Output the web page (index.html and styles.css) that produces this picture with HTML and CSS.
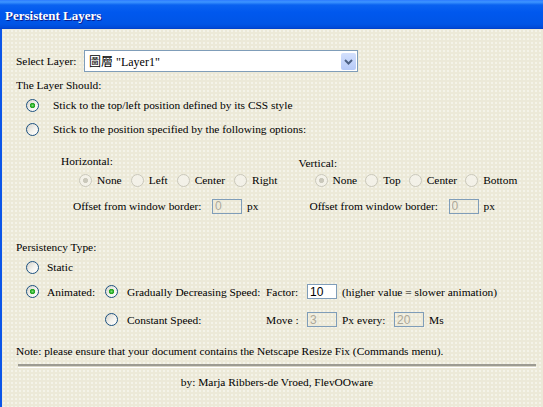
FILE: index.html
```html
<!DOCTYPE html>
<html lang="en">
<head>
    <meta charset="UTF-8">
    <title>Persistent Layers</title>
    <link rel="stylesheet" href="styles.css">
</head>
<body>

<div class="window">
    <div class="titlebar">Persistent Layers</div>

    <div class="content">
        <!-- Layer picker -->
        <div class="select-row">
            <span class="select-label">Select Layer:</span>
            <div class="select">
                <span class="select-text"><span class="cjk">圖層</span> "Layer1"</span>
                <span class="select-btn">
                    <svg width="15" height="17" viewBox="0 0 15 17">
                        <path d="M4 7 L7.5 10.5 L11 7" fill="none" stroke="#4d6185" stroke-width="2"/>
                    </svg>
                </span>
            </div>
        </div>

        <div class="heading">The Layer Should:</div>
        <div class="opt-row">
            <input type="radio" name="stick" class="radio" checked>
            <span>Stick to the top/left position defined by its CSS style</span>
        </div>
        <div class="opt-row">
            <input type="radio" name="stick" class="radio">
            <span>Stick to the position specified by the following options:</span>
        </div>

        <!-- Position options (disabled) -->
        <div class="position-panel">
            <div class="pos-col">
                <div class="pos-title">Horizontal:</div>
                <div class="choice-row">
                    <label class="choice"><input type="radio" name="hor" class="radio" checked disabled>None</label>
                    <label class="choice"><input type="radio" name="hor" class="radio" disabled>Left</label>
                    <label class="choice"><input type="radio" name="hor" class="radio" disabled>Center</label>
                    <label class="choice"><input type="radio" name="hor" class="radio" disabled>Right</label>
                </div>
                <div class="offset-row">
                    <span class="offset-label">Offset from window border:</span>
                    <input type="text" class="field" value="0" disabled>
                    <span class="unit">px</span>
                </div>
            </div>
            <div class="pos-col vertical">
                <div class="pos-title">Vertical:</div>
                <div class="choice-row">
                    <label class="choice"><input type="radio" name="ver" class="radio" checked disabled>None</label>
                    <label class="choice"><input type="radio" name="ver" class="radio" disabled>Top</label>
                    <label class="choice"><input type="radio" name="ver" class="radio" disabled>Center</label>
                    <label class="choice"><input type="radio" name="ver" class="radio" disabled>Bottom</label>
                </div>
                <div class="offset-row">
                    <span class="offset-label">Offset from window border:</span>
                    <input type="text" class="field" value="0" disabled>
                    <span class="unit">px</span>
                </div>
            </div>
        </div>

        <div class="heading persistency">Persistency Type:</div>
        <div class="type-grid">
            <input type="radio" name="type" class="radio">
            <span class="span-rest">Static</span>

            <input type="radio" name="type" class="radio" checked>
            <span>Animated:</span>
            <input type="radio" name="speed" class="radio" checked>
            <span>Gradually Decreasing Speed:</span>
            <span>Factor:</span>
            <div class="cell">
                <input type="text" class="field" value="10">
                <span>(higher value = slower animation)</span>
            </div>

            <span></span>
            <span></span>
            <input type="radio" name="speed" class="radio">
            <span>Constant Speed:</span>
            <span>Move :</span>
            <div class="cell">
                <input type="text" class="field" value="3" disabled>
                <span class="every">Px every:</span>
                <input type="text" class="field" value="20" disabled>
                <span>Ms</span>
            </div>
        </div>

        <div class="note">Note: please ensure that your document contains the Netscape Resize Fix (Commands menu).</div>
        <div class="divider"></div>
        <div class="credits">by: Marja Ribbers-de Vroed, FlevOOware</div>
    </div>
</div>

</body>
</html>
```

FILE: styles.css
```css
body {
    margin: 0;
    padding: 0;
    font-family: "Liberation Serif", "DejaVu Serif", serif;
    font-size: 11.4px;
    line-height: 16px;
    color: #000;
    white-space: nowrap;
}
.cjk {
    font-family: "Noto Sans CJK TC", sans-serif;
    font-size: 12px;
}
.window {
    width: 543px;
    height: 407px;
    overflow: hidden;
}
.titlebar {
    height: 29px;
    line-height: 31px;
    padding-left: 5px;
    font-size: 13px;
    font-weight: bold;
    color: #fff;
    text-shadow: 1px 1px 0 #0a1a8a;
    background: linear-gradient(#2d7bff 0, #3d95ff 2px, #0a62f0 5px, #0058ee 12px, #0055e6 24px, #0049d6 28px, #003cc4 29px);
}
.content {
    height: 378px;
    box-sizing: border-box;
    padding: 0 7px 0 14px;
    border-left: 2px solid #0b55e8;
    background-color: #ece9d8;
    background-image: radial-gradient(circle, rgba(255,255,255,0.45) 0.7px, transparent 1px);
    background-size: 4px 4px;
}

/* select */
.select-row {
    display: flex;
    align-items: center;
    gap: 7px;
    height: 22px;
    padding-top: 21px;
}
.select-label {
    width: 61px;
    flex: none;
}
.select {
    width: 274px;
    height: 22px;
    box-sizing: border-box;
    border: 1px solid #7f9db9;
    background: #fff;
    display: flex;
    align-items: center;
    justify-content: space-between;
    padding: 0 1px 0 4px;
    font-size: 12px;
}
.select-btn {
    width: 15px;
    height: 17px;
    border-radius: 2px;
    background: linear-gradient(#d3e0fd, #b6caf8);
    display: block;
}
.select-btn svg {
    display: block;
}

.heading {
    margin-top: 5px;
}
.opt-row {
    display: flex;
    align-items: center;
    gap: 14px;
    height: 24px;
    padding-left: 10px;
}

/* radios */
.radio {
    appearance: none;
    -webkit-appearance: none;
    margin: 0;
    width: 13px;
    height: 13px;
    flex: none;
    box-sizing: border-box;
    border: 1px solid #1c5180;
    border-radius: 50%;
    background: linear-gradient(135deg, #d4d2ca 0%, #f4f3ee 55%, #fff 100%);
}
.radio:checked {
    background: radial-gradient(circle at 50% 50%, #7fe07b 0, #2fb02c 1.6px, #21a121 2.4px, transparent 3px),
                linear-gradient(135deg, #d4d2ca 0%, #f4f3ee 55%, #fff 100%);
}
.radio:disabled {
    border-color: #cac8bb;
    background: #f3f1e8;
}
.radio:disabled:checked {
    background: radial-gradient(circle at 50% 50%, #cac8bb 0, #cac8bb 2.2px, transparent 2.9px), #f3f1e8;
}

/* position panel */
.position-panel {
    display: flex;
    margin-top: 12px;
    padding-left: 45px;
}
.pos-col {
    width: 241px;
}
.vertical .pos-title {
    margin-top: 2px;
    margin-bottom: -2px;
}
.choice-row {
    display: flex;
    align-items: center;
    height: 16px;
    margin-top: 3px;
    padding-left: 18px;
}
.vertical .choice-row {
    padding-left: 16px;
}
.choice {
    display: flex;
    align-items: center;
    gap: 5px;
    margin-right: 9px;
}
.vertical .choice {
    margin-right: 8px;
}
.offset-row {
    display: flex;
    align-items: center;
    height: 16px;
    margin-top: 10px;
    padding-left: 12px;
}
.vertical .offset-row {
    padding-left: 11px;
}
.offset-label {
    width: 139px;
    flex: none;
}
.unit {
    margin-left: 5px;
}

/* text fields */
.field {
    width: 30px;
    height: 15px;
    box-sizing: border-box;
    margin: 0;
    padding: 0 0 0 2px;
    border: 1px solid #7f9db9;
    background: #fff;
    font-family: "Liberation Sans", sans-serif;
    font-size: 12px;
    color: #000;
    flex: none;
}
.field:disabled {
    background: transparent;
    color: #aca899;
}

/* persistency */
.persistency {
    margin-top: 25px;
}
.type-grid {
    display: grid;
    grid-template-columns: 21px 58px 22px 139px 41px auto;
    grid-template-rows: 24px 25px 31px;
    align-items: center;
    padding-left: 10px;
}
.span-rest {
    grid-column: 2 / 7;
}
.cell {
    display: flex;
    align-items: center;
    gap: 5px;
}
.every {
    width: 47px;
}

.note {
    margin-top: 8px;
}
.divider {
    margin: 5px 0 0 2px;
    height: 4px;
    box-sizing: border-box;
    border-top: 2px solid #9d9b92;
    border-bottom: 1px solid #fff;
    background: #d8d5c6;
}
.credits {
    margin-top: 6px;
    margin-left: 2px;
    text-align: center;
}
```
